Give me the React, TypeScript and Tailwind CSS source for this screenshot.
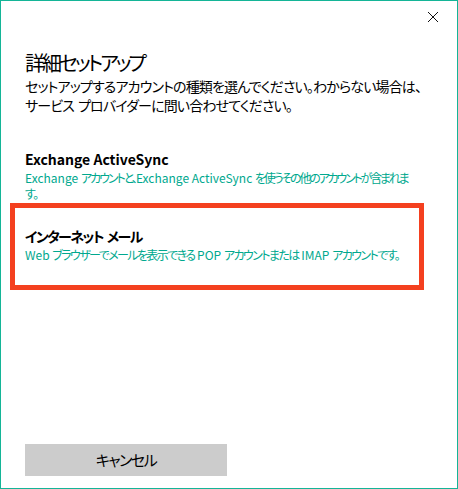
import React from 'react';

const font = "font-['Noto_Sans_CJK_JP','Noto_Sans',sans-serif] [font-feature-settings:'palt']";

// Japanese runs are set tighter, like the proportional kana of the original UI font
const J: React.FC<{ children: React.ReactNode; t?: string }> = ({ children, t = 'tracking-[-1.6px]' }) => (
  <span className={t}>{children}</span>
);

export default function App() {
  return (
    <div className={`w-[458px] h-[489px] bg-white border border-[#14b597] flex flex-col text-black ${font}`}>
      {/* Close */}
      <div className="h-[48px] flex justify-end items-start pt-[10px] pr-[18px]">
        <svg width="12" height="12" viewBox="0 0 12 12" className="block">
          <path d="M1 1 L11 11 M11 1 L1 11" stroke="#111" strokeWidth="1" fill="none" />
        </svg>
      </div>

      <div className="px-[24px] flex flex-col">
        <h1 className="mt-[1px] text-[20px] leading-[26px] font-normal tracking-[-3px]">詳細セットアップ</h1>
        <p className="mt-[1px] text-[14px] leading-[19px] tracking-[-0.85px] whitespace-nowrap">
          セットアップするアカウントの種類を選んでください。わからない場合は、
          <br />
          サービス<span className="ml-[4px]">プロバイダーに問い合わせてください。</span>
        </p>

        {/* Exchange */}
        <div className="mt-[34px]">
          <div className="text-[14px] leading-[20px] font-semibold">Exchange ActiveSync</div>
          <div className="mt-[1px] text-[12px] leading-[16px] text-[#00a88e] whitespace-nowrap">
            <div>
              Exchange <J t="tracking-[-2px]">アカウントと、</J>Exchange ActiveSync{' '}
              <J t="tracking-[-2.2px]">を使うその他のアカウントが含まれま</J>
            </div>
            <div>
              <J>す。</J>
            </div>
          </div>
        </div>

        {/* Internet mail (highlighted) */}
        <div className="mt-[1px] -ml-[15px] w-[414px] border-[5px] border-[#f4401f] pl-[10px] pt-[18px] pb-[23px]">
          <div className="text-[14px] leading-[20px] font-semibold tracking-[-1.6px]">
            インターネット<span className="ml-[4px]">メール</span>
          </div>
          <div className="mt-[1px] text-[12px] leading-[15px] text-[#00a88e] whitespace-nowrap">
            Web <J>ブラウザーでメールを表示できる</J> POP <J>アカウントまたは</J> IMAP <J>アカウントです。</J>
          </div>
        </div>
      </div>

      {/* Footer */}
      <div className="mt-auto mb-[12px] px-[24px]">
        <button className="w-[202px] h-[32px] bg-[#cccccc] text-[15px] text-black tracking-[-1.5px]">キャンセル</button>
      </div>
    </div>
  );
}
